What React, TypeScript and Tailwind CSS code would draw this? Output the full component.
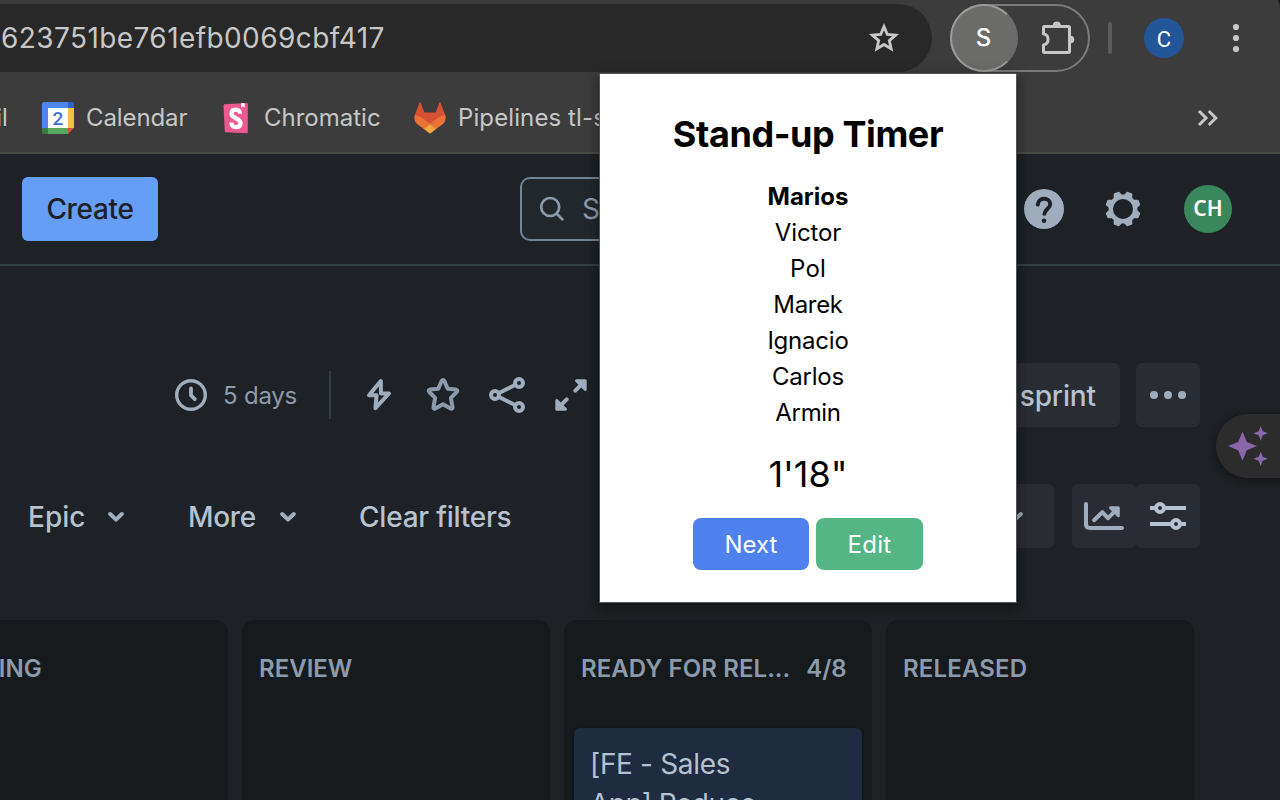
import type { ReactNode } from 'react';

const people = [
  { name: 'Marios', cls: 'font-bold' },
  { name: 'Victor', cls: 'tracking-[-0.005em]' },
  { name: 'Pol', cls: 'tracking-[0.01em]' },
  { name: 'Marek', cls: 'tracking-[-0.013em]' },
  { name: 'Ignacio', cls: 'tracking-[-0.009em]' },
  { name: 'Carlos', cls: 'tracking-[-0.009em]' },
  { name: 'Armin', cls: 'tracking-[-0.013em]' },
];

function CalendarIcon() {
  return (
    <svg width="32" height="32" viewBox="0 0 32 32" className="shrink-0">
      <path d="M2 0h24v6H6v20H0V2a2 2 0 0 1 2-2z" fill="#4f86ec" />
      <path d="M26 0h4a2 2 0 0 1 2 2v4h-6z" fill="#2f63cb" />
      <path d="M26 6h6v20h-6z" fill="#f3c144" />
      <path d="M0 26h6v6H2a2 2 0 0 1-2-2z" fill="#3b7d40" />
      <path d="M6 26h20v6H6z" fill="#58a65c" />
      <path d="M26 26h6l-6 6z" fill="#d9513b" />
      <path d="M6 6h20v20H6z" fill="#fff" />
      <text x="16" y="22.8" textAnchor="middle" fontFamily="Roboto, sans-serif" fontSize="19" fontWeight="500" fill="#3a6fd8">2</text>
    </svg>
  );
}

function StorybookIcon() {
  return (
    <svg width="26" height="32" viewBox="0 0 26 32" className="shrink-0">
      <path d="M1.600 2.200 23.600.9q1.200 0 1.200 1.200v28q0 1.200-1.200 1.200L3 30.300q-1.200 0-1.300-1.200L.5 3.600q0-1.300 1.100-1.400z" fill="#ec5990" />
      <path d="M18.200 1.200 21.600 1l.1 4.600-1.600-1.200-1.900 1.300z" fill="#fff" />
      <path d="M17 11.800c0-2.800-1.600-4.100-4.200-4.100s-4.300 1.500-4.300 4c0 5 9 4 9 9.200 0 2.700-1.800 4.200-4.600 4.200s-4.600-1.500-4.500-4.600" fill="none" stroke="#fff" strokeWidth="4.300" />
    </svg>
  );
}

function GitlabIcon() {
  return (
    <svg width="32" height="32" viewBox="0 0 32 32" className="shrink-0">
      <path d="M5.500.6c.3-.6 1-.5 1.200.1L10.300 10.500h11.400L25.300.7c.2-.6.900-.7 1.200-.1L31 12.500c1.300 3.600.3 7.500-2.600 9.800L16 31.500 3.600 22.300C.7 20-.3 16.100 1 12.500z" fill="#d65035" />
      <path d="M1 12.700c3 .7 5.500 2 7.700 3.600L16 21.800l7.300-5.500c2.200-1.600 4.700-2.900 7.700-3.600 1.200 3.600.2 7.300-2.600 9.600L16 31.500 3.600 22.300C.8 20-.2 16.300 1 12.700z" fill="#ea7237" />
      <path d="m16 22.300 5.800 4.800L16 31.500l-5.800-4.400z" fill="#f1a843" />
    </svg>
  );
}

function PuzzleIcon() {
  return (
    <svg width="36" height="36" viewBox="0 0 36 36" fill="none" stroke="#c7c7c7" strokeWidth="3">
      <path d="M4.500 6.500h24a1 1 0 0 1 1 1v24a1 1 0 0 1-1 1h-24a1 1 0 0 1-1-1v-6.600a5.600 5.600 0 0 0 0-11V7.500a1 1 0 0 1 1-1z" strokeLinejoin="round" />
      <path d="M12.800 5.500a4 4 0 0 1 8 0zM30.500 15.800a3.800 3.800 0 0 1 0 7.600z" fill="#c7c7c7" stroke="none" />
    </svg>
  );
}

function GearIcon() {
  const teeth = [22.5, 67.5, 112.5, 157.5, 202.5, 247.5, 292.5, 337.5];
  return (
    <svg width="36" height="36" viewBox="0 0 36 36">
      <circle cx="18" cy="18" r="12.200" fill="none" stroke="#9fadbc" strokeWidth="4.400" />
      {teeth.map((a) => (
        <path key={a} d="M13 6.200 14.800 1.300q.3-1 1.300-1h3.800q1 0 1.300 1L23 6.200z" fill="#9fadbc" transform={`rotate(${a} 18 18)`} />
      ))}
    </svg>
  );
}

function Chevron() {
  return (
    <svg width="16" height="12" viewBox="0 0 16 12" fill="none" stroke="#9fadbc" strokeWidth="4" strokeLinecap="round" strokeLinejoin="round" className="mt-[2px] shrink-0">
      <path d="m2.200 3 5.800 5.600L13.800 3" />
    </svg>
  );
}

function Column({ title, count, className = '', children }: { title: string; count?: string; className?: string; children?: ReactNode }) {
  return (
    <section className="h-[200px] w-[308px] shrink-0 rounded-t-[12px] bg-[#161a1d] px-[10px]">
      <div className="flex h-[108px] items-start pt-[33px] pl-[7px] text-[24px] leading-[32px] font-[640] text-[#8c9bab]">
        <span className={`whitespace-nowrap ${className}`}>{title}</span>
        {count && <span className="ml-[16px] tracking-[-0.004em]">{count}</span>}
      </div>
      {children}
    </section>
  );
}

function BrowserChrome() {
  return (
    <header className="h-[154px] border-b-2 border-[#474b48] bg-[#3c3c3c]">
      <div className="flex h-[72px] items-start pt-1">
        <div className="flex h-[68px] w-[932px] items-center rounded-r-full bg-[#282828] pr-8 pl-px">
          <span className="text-[28px] tracking-[0.0149em] text-[#c7c7c7]">623751be761efb0069cbf417</span>
          <svg width="32" height="32" viewBox="0 0 32 32" fill="none" stroke="#c7c7c7" strokeWidth="2.800" className="ml-auto">
            <path d="m16 4.600 3.300 7.800 8.400.7-6.400 5.500 1.900 8.200-7.200-4.300-7.200 4.300 1.900-8.200-6.400-5.500 8.400-.7z" />
          </svg>
        </div>
        <div className="ml-[18px] flex h-[68px] w-[140px] items-center rounded-full border-2 border-[#7b7b7a]">
          <div className="-ml-[2px] flex size-[68px] shrink-0 items-center justify-center rounded-full border-2 border-[#9a9a98] border-r-[#6b6b69] bg-[#6b6b69] pr-px text-[24px] font-medium text-white">S</div>
          <div className="-mt-[1px] ml-[22px] shrink-0"><PuzzleIcon /></div>
        </div>
        <div className="mt-[18px] ml-[18px] h-8 w-1 rounded-full bg-[#5c5c5c]" />
        <div className="mt-[14px] ml-8 flex size-10 items-center justify-center rounded-full bg-[#235699] pt-[2px] font-['Roboto',sans-serif] text-[22px] text-white">C</div>
        <svg width="8" height="32" viewBox="0 0 8 32" fill="#c7c7c7" className="mt-[18px] ml-12">
          <circle cx="4" cy="5" r="3.100" /><circle cx="4" cy="16" r="3.100" /><circle cx="4" cy="27" r="3.100" />
        </svg>
      </div>
      <nav className="flex h-[80px] items-center pt-[12px] text-[24px] whitespace-nowrap text-[#c7c7c7]">
        <span className="flex w-[42px]"><span className="-ml-[39px]">Mail</span></span>
        <span className="flex w-[181px] items-center gap-3"><CalendarIcon /><span className="tracking-[-0.004em]">Calendar</span></span>
        <span className="flex w-[191px] items-center gap-[15px]"><StorybookIcon /><span>Chromatic</span></span>
        <span className="flex w-[240px] items-center gap-3"><GitlabIcon /><span className="tracking-[0.0045em]">Pipelines tl-sales</span></span>
        <svg width="24" height="20" viewBox="0 0 24 20" fill="none" stroke="#c7c7c7" strokeWidth="3" className="mr-[60px] ml-auto">
          <path d="m3 3 7 7-7 7M12.800 3l7 7-7 7" />
        </svg>
      </nav>
    </header>
  );
}

function JiraHeader() {
  return (
    <div className="flex h-[112px] items-center border-b-2 border-[#343c44] pl-[22px]">
      <button className="h-16 w-[136px] rounded-[6px] bg-[#669df7] text-[28px] font-[540] tracking-[-0.012em] text-[#1d2125]">Create</button>
      <div className="ml-[362px] flex h-16 w-[320px] items-center rounded-[10px] border-2 border-[#738496] bg-[#22272b] pl-[17px]">
        <svg width="28" height="28" viewBox="0 0 28 28" fill="none" stroke="#8c9bab" strokeWidth="2.700" strokeLinecap="round">
          <circle cx="11.200" cy="12" r="9" /><path d="m17.800 18.700 5.600 5.700" />
        </svg>
        <span className="ml-[15px] text-[28px] text-[#8c9bab]">Search</span>
      </div>
      <svg width="40" height="40" viewBox="0 0 40 40" className="ml-[184px] shrink-0">
        <circle cx="20" cy="20" r="20" fill="#9fadbc" />
        <path d="M13.800 15.600c.2-3.600 2.700-5.800 6.200-5.800 3.600 0 6.200 2.200 6.200 5.400 0 4.300-5.300 4.700-5.800 9.700" fill="none" stroke="#1d2125" strokeWidth="3.900" strokeLinecap="round" />
        <circle cx="20" cy="31.800" r="2.300" fill="#1d2125" />
      </svg>
      <div className="-mt-px ml-[41px]"><GearIcon /></div>
      <div className="ml-[43px] flex size-12 shrink-0 items-center justify-center rounded-full bg-[#3b875d] font-['Noto_Sans',sans-serif] text-[21px] font-semibold text-white">CH</div>
    </div>
  );
}

function SprintActions() {
  return (
    <div className="flex h-16 items-center">
      <svg width="32" height="32" viewBox="0 0 32 32" fill="none" stroke="#9fadbc" strokeWidth="3.400" strokeLinecap="round" className="ml-[175px] shrink-0">
        <circle cx="16" cy="16" r="14.300" /><path d="M16 9.500v6.800l3.800 3.800" strokeWidth="3.800" />
      </svg>
      <span className="ml-4 w-[106px] pt-[2px] text-[24px] tracking-[-0.009em] text-[#8c9bab]">5 days</span>
      <span className="h-12 w-[2px] bg-[#343c44]" />
      <svg width="28" height="36" viewBox="0 0 28 36" fill="none" stroke="#9fadbc" strokeWidth="4" strokeLinejoin="round" className="ml-[34px] shrink-0">
        <path d="M15.800 4 4 18.200h7.600l-1.200 13L24 16.500h-8z" />
      </svg>
      <svg width="36" height="36" viewBox="0 0 36 36" fill="none" stroke="#8c9bab" strokeWidth="4" strokeLinejoin="round" className="ml-8 shrink-0">
        <path d="M16.700 3.900q1.300-2 2.600 0l3.400 7.800 8.300.9q2.100.6.8 2.200l-5.900 6 1.600 9.200q.2 2.200-1.800 1.500L18 27.300l-7.700 4.200q-2 .7-1.800-1.500l1.600-9.200-5.900-6q-1.300-1.600.8-2.200l8.300-.9z" />
      </svg>
      <svg width="36" height="36" viewBox="0 0 36 36" fill="none" stroke="#9fadbc" strokeWidth="4" className="ml-7 shrink-0">
        <circle cx="6" cy="18" r="4" /><circle cx="30" cy="6" r="4" /><circle cx="30" cy="30" r="4" />
        <path d="M10 16 26 8M10 20l16 8" />
      </svg>
      <svg width="32" height="32" viewBox="0 0 32 32" fill="none" stroke="#9fadbc" strokeWidth="4" strokeLinecap="round" strokeLinejoin="round" className="ml-[30px] shrink-0">
        <path d="M20.300 11.700 29 3M11.700 20.300 3 29" />
        <path d="M21.500 1.800h8.700v8.700zM10.500 30.200H1.800v-8.700z" fill="#9fadbc" strokeWidth="3" />
      </svg>
      <button className="ml-auto h-16 rounded-[6px] bg-[#2a2c34] px-6 pt-px text-[28px] font-[540] tracking-[-0.004em] text-[#b6c2cf]">Complete sprint</button>
      <button className="mr-20 ml-4 flex size-16 items-center justify-center rounded-[6px] bg-[#2a2c34]">
        <svg width="36" height="8" viewBox="0 0 36 8" fill="#9fadbc"><circle cx="4" cy="4" r="4" /><circle cx="18" cy="4" r="4" /><circle cx="32" cy="4" r="4" /></svg>
      </button>
    </div>
  );
}

function Filters() {
  return (
    <div className="mt-[57px] flex h-16 items-center pr-20 text-[28px] font-[540] text-[#b6c2cf]">
      <span className="ml-[28px] w-[80px] pt-px">Epic</span><Chevron />
      <span className="ml-[64px] w-[92px] pt-px tracking-[-0.012em]">More</span><Chevron />
      <span className="ml-[63px] pt-px tracking-[-0.008em]">Clear filters</span>
      <div className="ml-auto flex h-16 w-[200px] items-center justify-end rounded-[6px] bg-[#2a2c34] pr-[31px]"><Chevron /></div>
      <div className="ml-[18px] flex size-16 items-center justify-center rounded-[6px] bg-[#2a2c34]">
        <svg width="40" height="32" viewBox="0 0 40 32" fill="none" stroke="#9fadbc" strokeWidth="4" strokeLinecap="round" strokeLinejoin="round">
          <path d="M2 4V24.300Q2 28 5.700 28H38" />
          <path d="m10 20.200 8.300-8 5.700 6 7-7" />
          <path d="M26.500 7.700h7.800v8z" fill="#9fadbc" strokeWidth="3" />
        </svg>
      </div>
      <div className="flex size-16 items-center justify-center rounded-[6px] bg-[#2a2c34]">
        <svg width="36" height="32" viewBox="0 0 36 32" fill="none" stroke="#b6c2cf" strokeWidth="4">
          <path d="M0 8h6M14 8h22M0 24h22M30 24h6" />
          <circle cx="10" cy="8" r="4" /><circle cx="26" cy="24" r="4" />
        </svg>
      </div>
    </div>
  );
}

function TimerPopup() {
  return (
    <div className="absolute top-[74px] left-[600px] h-[528px] w-[416px] bg-white text-center text-black shadow-[0_0_0_1px_#505253,0_4px_12px_2px_rgba(0,0,0,0.4)]">
      <h1 className="mt-[36px] text-[36px] leading-[48px] font-bold tracking-[-0.0117em]">Stand-up Timer</h1>
      <ul className="mt-[21px] text-[24px] leading-[36px]">
        {people.map((p) => <li key={p.name} className={p.cls}>{p.name}</li>)}
      </ul>
      <p className="mt-[19px] text-[36px] leading-[48px]">1&apos;18&quot;</p>
      <div className="mt-[20px] flex justify-center gap-[7px] text-[24px] text-white">
        <button className="h-[52px] w-[116px] rounded-[8px] bg-[#4e80ee] pt-[2px]">Next</button>
        <button className="h-[52px] w-[107px] rounded-[8px] bg-[#55b685] pt-[2px] tracking-[0.012em]">Edit</button>
      </div>
    </div>
  );
}

export default function App() {
  return (
    <div className="relative h-[800px] w-[1280px] overflow-hidden bg-[#1e2125] font-['Inter','Liberation_Sans',sans-serif]">
      <BrowserChrome />
      <JiraHeader />
      <main className="pt-[97px]">
        <SprintActions />
        <Filters />
        <div className="mt-[72px] -ml-[80px] flex gap-[14px]">
          <Column title="TESTING" />
          <Column title="REVIEW" />
          <Column title="READY FOR REL..." count="4/8" className="tracking-[0.003em]" />
          <Column title="RELEASED" className="tracking-[0.007em]" />
        </div>
      </main>
      <div className="absolute top-[728px] left-[574px] h-[90px] w-[288px] rounded-[6px] bg-[#1f2b40] px-4 pt-[16px] text-[28px] leading-[40px] text-[#b6c2cf] shadow-[0_1px_3px_rgba(0,0,0,0.5)]">
        <div className="tracking-[-0.012em]">[FE - Sales</div>
        <div className="tracking-[-0.018em]">App] Reduce</div>
      </div>
      <div className="absolute top-[414px] left-[1216px] h-16 w-[80px] rounded-l-full bg-[#2c2c2c] pt-[10px] pl-[10px] shadow-[0_2px_10px_rgba(0,0,0,0.4)]">
        <svg width="44" height="44" viewBox="0 0 44 44" fill="#8b66ab">
          <path d="M16.500 7.500 20.800 18 31 22 20.800 26.300 16.500 36.800 12.200 26.300 2 22 12.200 18z" />
          <path d="m34.700 2 2 5.300 5.300 2-5.300 2-2 5.200-2-5.200-5.200-2 5.200-2zM34.700 27.500l2 5.200 5.300 2-5.300 2-2 5.300-2-5.300-5.200-2 5.200-2z" />
        </svg>
      </div>
      <svg width="2" height="6" viewBox="0 0 2 6" className="absolute top-0 right-0"><path d="M0 0h2v6z" fill="#1b1b1b" /></svg>
      <TimerPopup />
    </div>
  );
}
